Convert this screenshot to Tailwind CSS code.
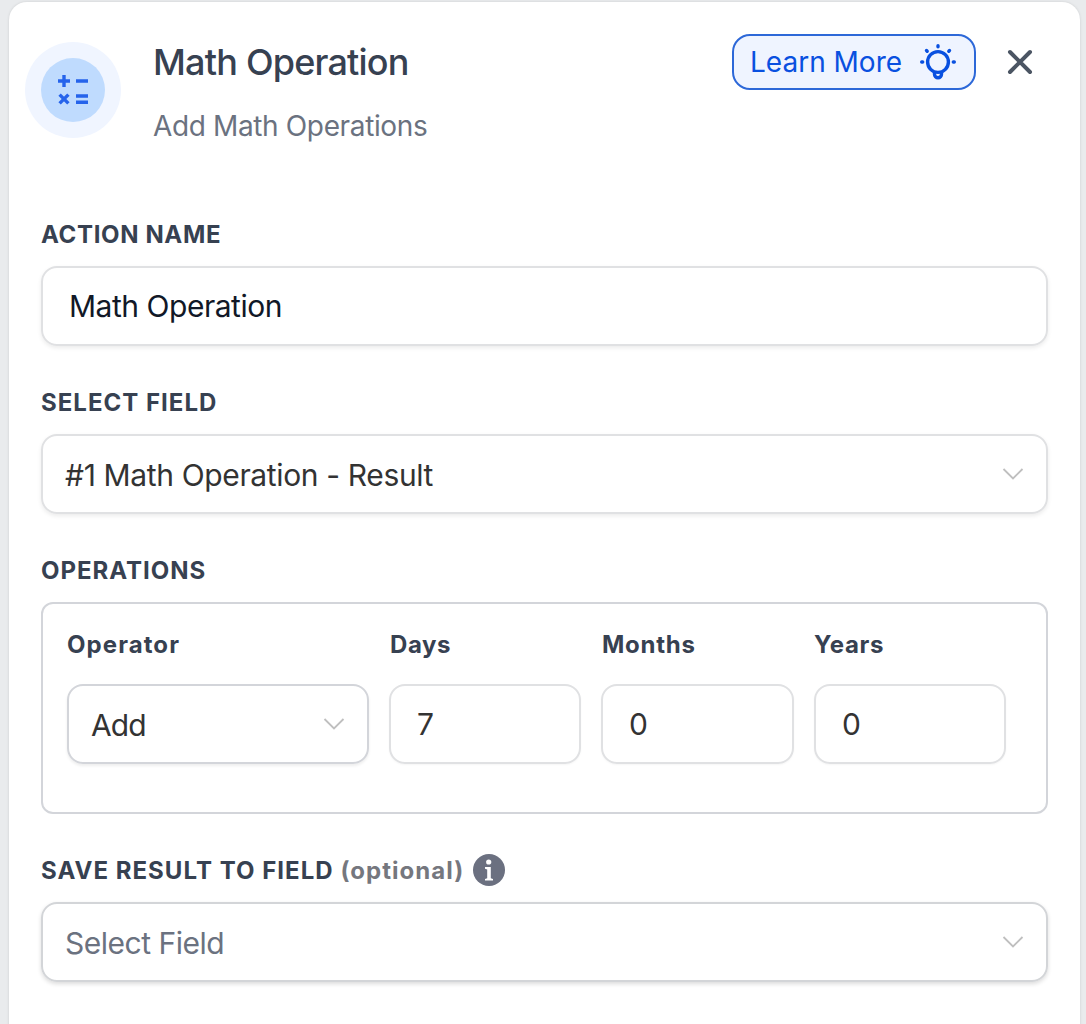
<!DOCTYPE html>
<html lang="en">

<head>
    <meta charset="UTF-8">
    <meta name="viewport" content="width=device-width, initial-scale=1.0">
    <script src="https://cdn.jsdelivr.net/npm/@tailwindcss/browser@4"></script>
    <title>Math Operation</title>
</head>

<body class="h-screen overflow-hidden bg-[#e9ebed] pl-[9px] pr-[6px] pt-[2px] font-['Inter',sans-serif] text-[#374151]">
<div class="h-[1060px] rounded-t-[18px] bg-white px-8 shadow-[0_0_3px_rgba(0,0,0,0.12)]">
    <!-- header -->
    <div class="flex h-[216px] items-start justify-between">
        <div class="flex pt-10">
            <div class="-ml-4 flex size-24 items-center justify-center rounded-full bg-[#f0f5ff]">
                <div class="flex size-16 items-center justify-center rounded-full bg-[#bfdbfe]">
                    <svg class="size-8" viewBox="0 0 32 32" fill="none" stroke="#2563eb" stroke-width="3.4">
                        <path d="M1 7h12M7 1v12M19 7h12M2.600 20.600l8.800 8.800M11.400 20.600l-8.800 8.800M19 22h12M19 28.200h12" />
                    </svg>
                </div>
            </div>
            <div class="ml-8">
                <h1 class="text-[36px] leading-10 font-medium tracking-[-0.022em]">Math Operation</h1>
                <p class="mt-6 text-[28px] leading-10 tracking-[-0.013em] text-[#6b7280]">Add Math Operations</p>
            </div>
        </div>
        <div class="flex items-center pt-8">
            <button class="flex h-14 w-[244px] items-center justify-between rounded-[18px] border-2 border-[#2d68d8] bg-[#eff4ff] pr-[18px] pl-4 text-[28px] text-[#0950e0]">
                <span>Learn More</span>
                <svg class="size-9" viewBox="0 0 36 36" fill="none" stroke="currentColor" stroke-width="3.4" stroke-linecap="round">
                    <circle cx="18" cy="18" r="10.400" />
                    <path d="M14.500 28.500v1.800a3.500 3.500 0 0 0 7 0v-1.800M18 1.700v1M1.700 18h1M33.300 18h1M6.500 6.500l.7.7M29.500 6.500l-.7.7" />
                </svg>
            </button>
            <button class="mr-[15px] ml-[31px]" aria-label="Close">
                <svg class="size-[26px]" viewBox="0 0 26 26" fill="none" stroke="#4b5563" stroke-width="4" stroke-linecap="round">
                    <path d="M3 3l20 20M23 3L3 23" />
                </svg>
            </button>
        </div>
    </div>

    <div class="flex flex-col gap-10">
        <div>
            <label for="action-name" class="block pt-px text-[24px] leading-8 font-bold tracking-[0.027em]">ACTION NAME</label>
            <input id="action-name" type="text" value="Math Operation" class="mt-[15px] block h-20 w-full rounded-[16px] border-2 border-[#e0e1e3] px-[26px] text-[30px] tracking-[-0.016em] text-[#111827] shadow-[0_2px_4px_rgba(0,0,0,0.08)] outline-none">
        </div>

        <div>
            <label class="block pt-px text-[24px] leading-8 font-bold tracking-[0.042em]">SELECT FIELD</label>
            <div class="mt-[15px] flex h-20 items-center justify-between rounded-[16px] border-2 border-[#e0e1e3] px-[22px] text-[30px] tracking-[-0.012em] text-[#333] shadow-[0_2px_4px_rgba(0,0,0,0.08)]">
                <span class="pt-0.5">#1 Math Operation - Result</span>
                <svg class="h-3 w-[22px]" viewBox="0 0 22 12" fill="none" stroke="#bfbfbf" stroke-width="1.8"><path d="M1.500 1l9.500 9.500L20.500 1" /></svg>
            </div>
        </div>

        <div>
            <label class="block pt-px text-[24px] leading-8 font-bold tracking-[0.041em]">OPERATIONS</label>
            <div class="mt-[15px] grid h-[212px] grid-cols-[302px_192px_193px_192px] content-start gap-x-5 rounded-[12px] border-2 border-[#d3d5da] px-6 pt-6">
                <div>
                    <label class="block pt-px text-[24px] leading-8 font-bold tracking-[0.045em]">Operator</label>
                    <div class="mt-[23px] flex h-20 items-center justify-between rounded-[16px] border-2 border-[#d3d5da] px-[22px] text-[30px] tracking-[-0.03em] text-[#333] shadow-[0_2px_3px_rgba(0,0,0,0.07)]">
                        <span class="pt-0.5">Add</span>
                        <svg class="h-3 w-[22px]" viewBox="0 0 22 12" fill="none" stroke="#bfbfbf" stroke-width="1.8"><path d="M1.500 1l9.500 9.500L20.500 1" /></svg>
                    </div>
                </div>
                <div>
                    <label for="days" class="block pt-px pl-px text-[24px] leading-8 font-bold tracking-[0.025em]">Days</label>
                    <input id="days" type="text" value="7" class="mt-[23px] block h-20 w-full rounded-[16px] border-2 border-[#e0e1e3] px-[26px] text-[30px] text-[#333] shadow-[0_1px_2px_rgba(0,0,0,0.04)] outline-none">
                </div>
                <div>
                    <label for="months" class="block pt-px pl-px text-[24px] leading-8 font-bold tracking-[0.03em]">Months</label>
                    <input id="months" type="text" value="0" class="mt-[23px] block h-20 w-full rounded-[16px] border-2 border-[#e0e1e3] px-[26px] text-[30px] text-[#333] shadow-[0_1px_2px_rgba(0,0,0,0.04)] outline-none">
                </div>
                <div>
                    <label for="years" class="block pt-px text-[24px] leading-8 font-bold tracking-[0.03em]">Years</label>
                    <input id="years" type="text" value="0" class="mt-[23px] block h-20 w-full rounded-[16px] border-2 border-[#e0e1e3] px-[26px] text-[30px] text-[#333] shadow-[0_1px_2px_rgba(0,0,0,0.04)] outline-none">
                </div>
            </div>
        </div>

        <div>
            <label class="flex items-center text-[24px] leading-8 font-bold tracking-[0.043em]">
                <span class="-mb-0.5">SAVE RESULT TO FIELD <span class="text-[#75777e]">(optional)</span></span>
                <svg class="ml-[9px] size-8" viewBox="0 0 32 32">
                    <circle cx="16" cy="16" r="16" fill="#6b7080" />
                    <circle cx="15.700" cy="8" r="2.600" fill="#fff" />
                    <path d="M12 13h5.800v11.300l2.200.7v1.600h-8v-1.600l2.200-.7v-8.900l-2.200-.6z" fill="#fff" />
                </svg>
            </label>
            <div class="mt-4 flex h-20 items-center justify-between rounded-[16px] border-2 border-[#d3d5d8] px-[22px] text-[30px] tracking-[-0.016em] text-[#6b7280] shadow-[0_2px_4px_rgba(0,0,0,0.14)]">
                <span class="pt-0.5">Select Field</span>
                <svg class="h-3 w-[22px]" viewBox="0 0 22 12" fill="none" stroke="#bfbfbf" stroke-width="1.8"><path d="M1.500 1l9.500 9.500L20.500 1" /></svg>
            </div>
        </div>
    </div>
</div>
</body>

</html>
